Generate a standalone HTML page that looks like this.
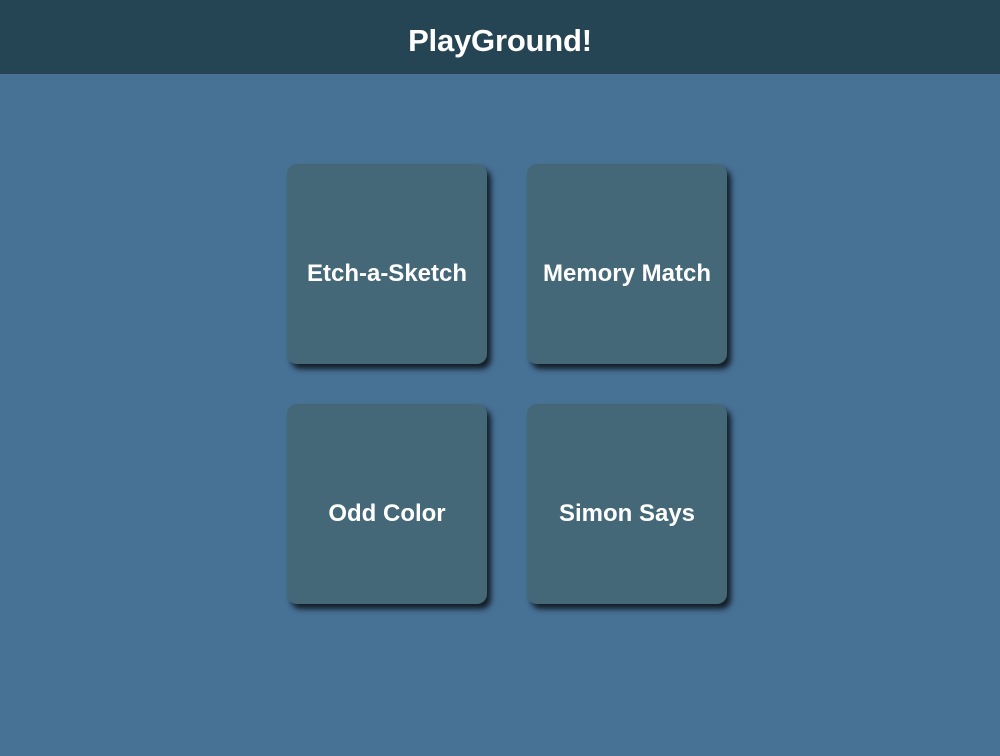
<!DOCTYPE html>
<html><head><meta charset="utf-8"><style>
html,body{margin:0;padding:0;width:1000px;height:756px;overflow:hidden;background:#477195;font-family:"Liberation Sans",sans-serif;}
.h{height:74px;background:#254554;color:#fff;font-weight:bold;font-size:31px;text-align:center;line-height:82px;letter-spacing:-0.2px}
.c{position:absolute;width:200px;height:200px;box-sizing:border-box;padding-top:20px;border-radius:10px;background:#446877;box-shadow:4px 5px 6px rgba(0,0,0,0.75);color:#fff;font-weight:bold;font-size:24px;display:flex;align-items:center;justify-content:center;letter-spacing:0px}
</style></head><body>
<div class="h">PlayGround!</div>
<div class="c" style="left:287px;top:164px">Etch-a-Sketch</div>
<div class="c" style="left:527px;top:164px">Memory Match</div>
<div class="c" style="left:287px;top:404px">Odd Color</div>
<div class="c" style="left:527px;top:404px">Simon Says</div>
</body></html>
